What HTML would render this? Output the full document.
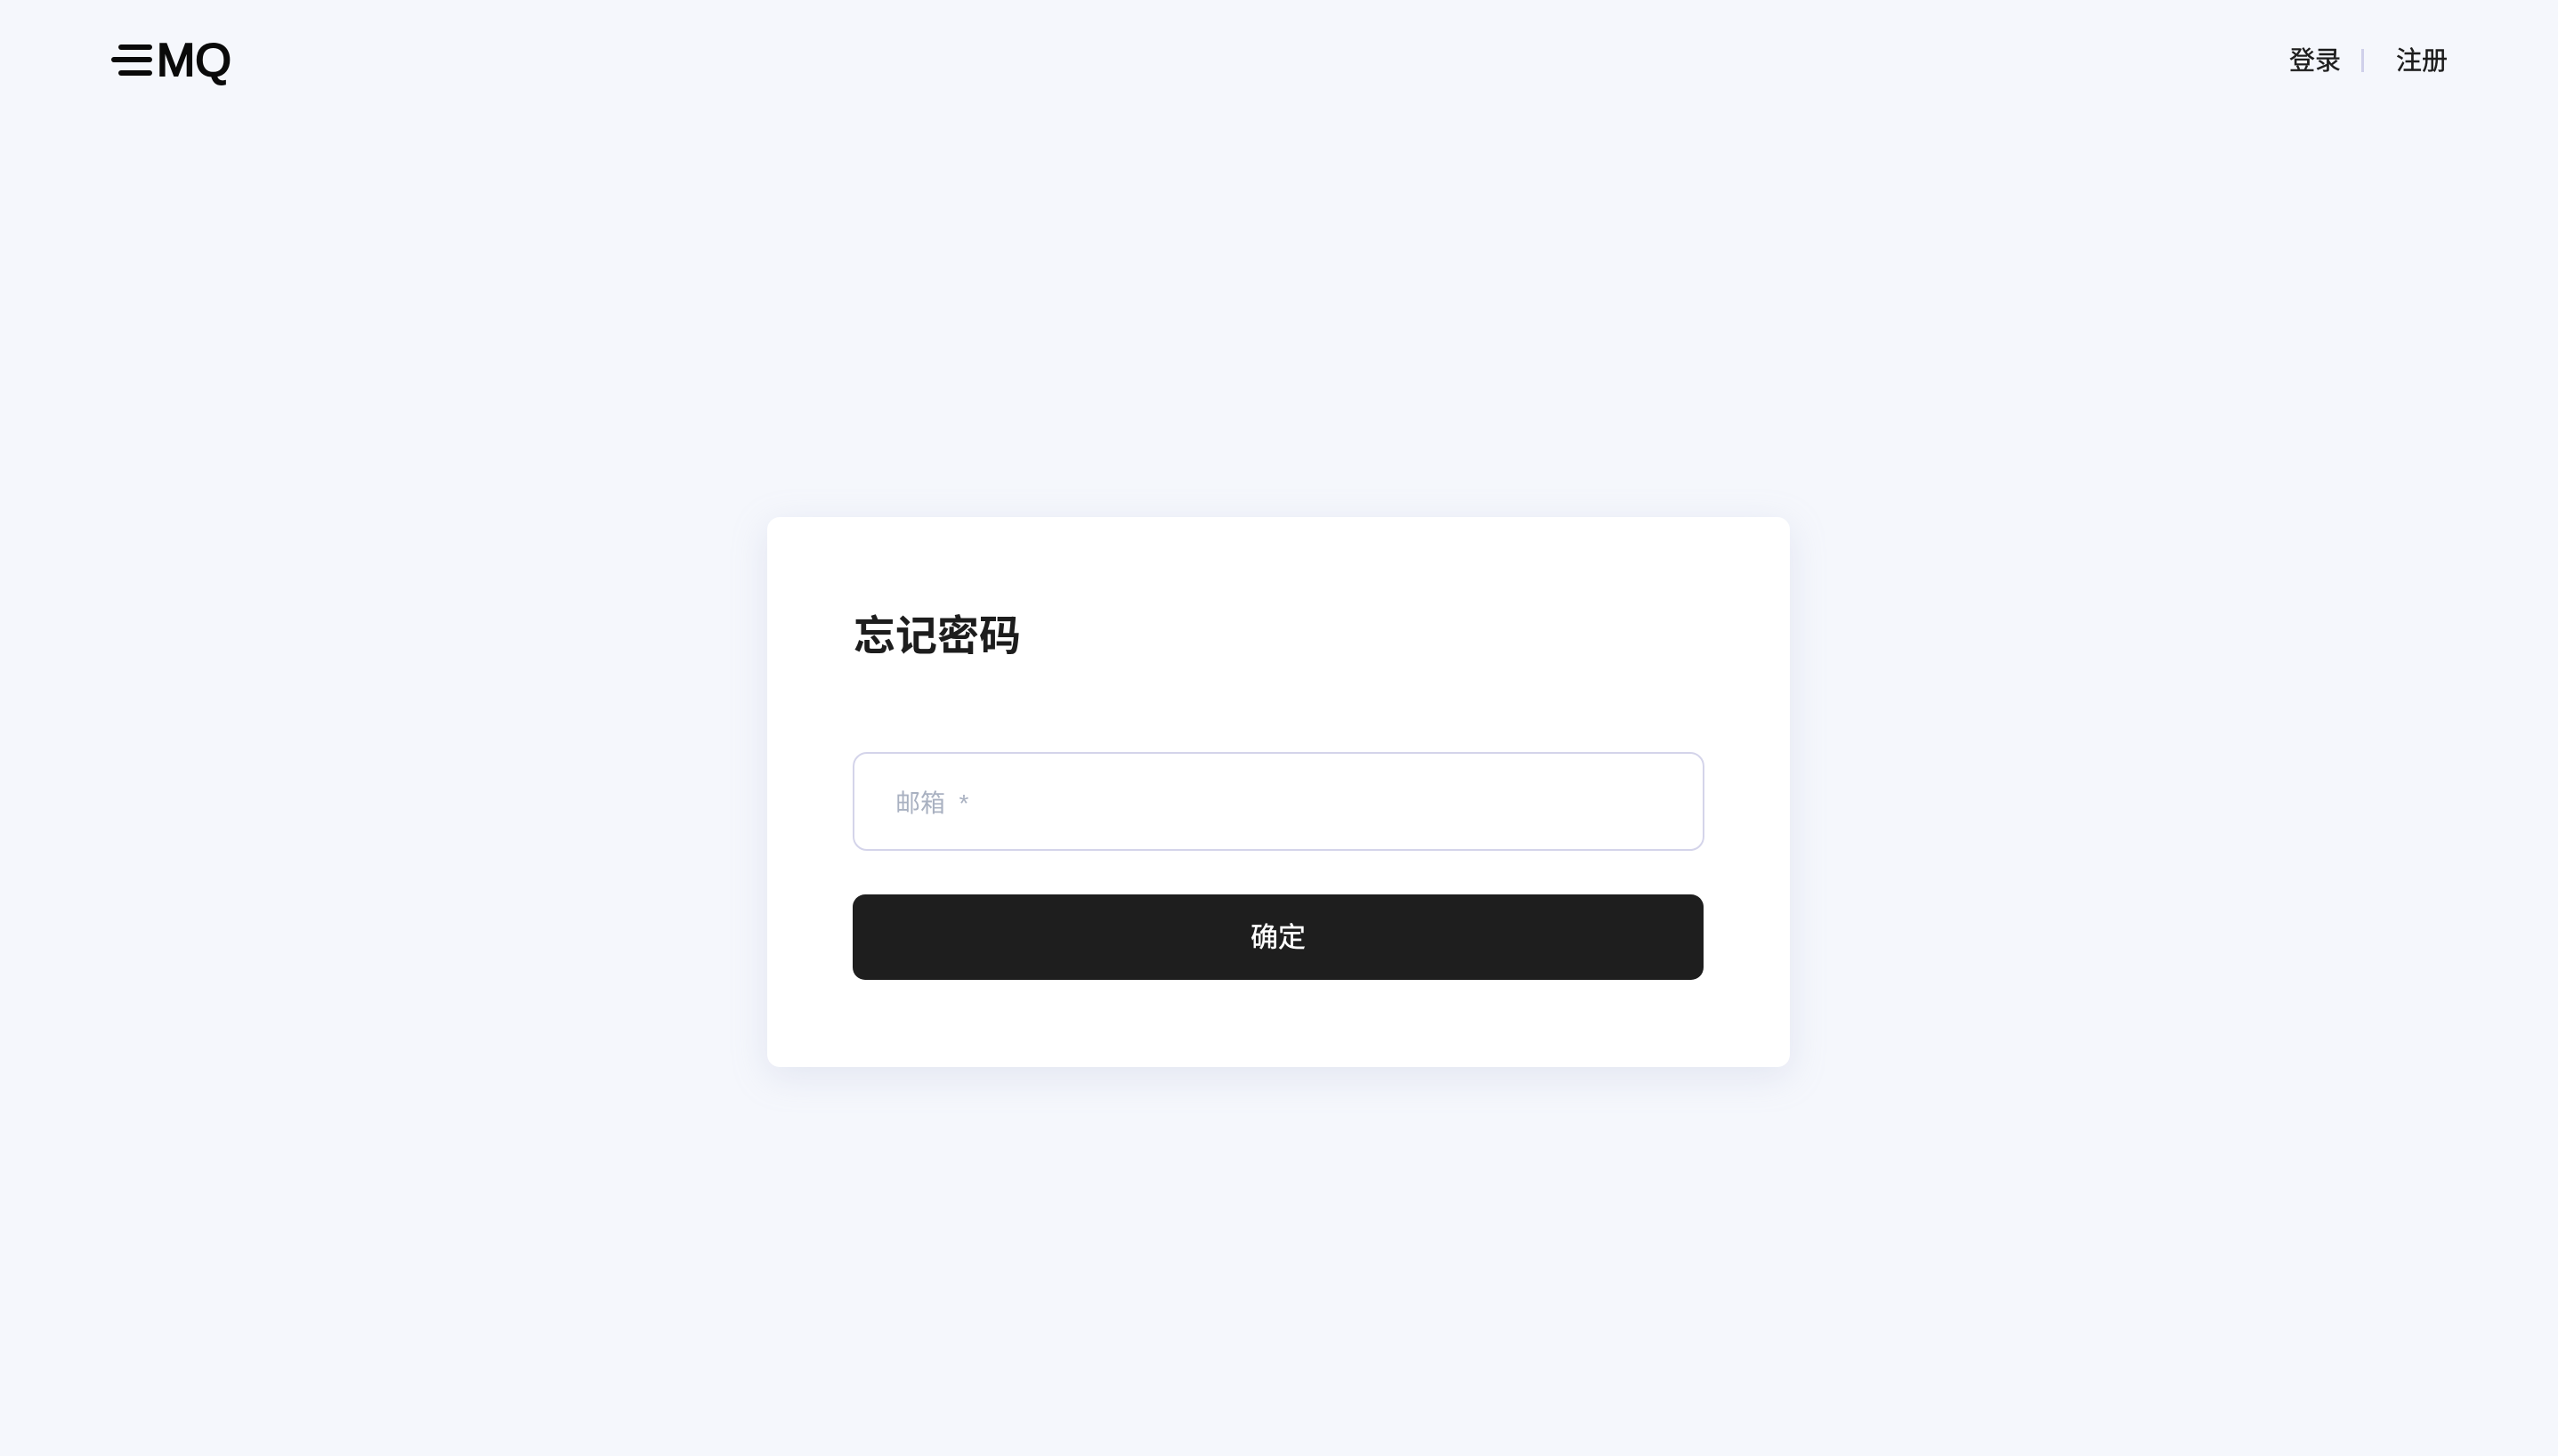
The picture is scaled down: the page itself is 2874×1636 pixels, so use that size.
<!DOCTYPE html>
<html><head><meta charset="utf-8"><style>
html,body{margin:0;padding:0;}
body{width:2874px;height:1636px;background:#f5f7fc;position:relative;overflow:hidden;font-family:"Liberation Sans","Noto Sans CJK SC",sans-serif;}
.bar{position:absolute;height:6px;border-radius:3px;background:#0a0a0a;}
.mq{position:absolute;left:176px;top:38px;font-size:52px;font-weight:400;color:#0a0a0a;letter-spacing:0px;line-height:60px;-webkit-text-stroke:2px #0a0a0a;}
.nav{position:absolute;top:47px;font-size:29px;color:#1d1d1d;line-height:44px;-webkit-text-stroke:0.4px #1d1d1d;}
.sep{position:absolute;left:2653px;top:55px;width:3px;height:26px;background:#cfd0ea;}
.card{position:absolute;left:862px;top:581px;width:1149px;height:618px;background:#fff;border-radius:14px;box-shadow:0 10px 40px rgba(170,180,210,0.25);}
.title{position:absolute;left:959px;top:685px;font-size:47px;font-weight:700;color:#1d1d1d;line-height:60px;}
.input{position:absolute;left:958px;top:845px;width:953px;height:107px;border:2px solid #d4d4ea;border-radius:16px;background:#fff;}
.ph{position:absolute;left:1006px;top:883px;font-size:28px;color:#a9b1c1;line-height:40px;}
.btn{position:absolute;left:958px;top:1005px;width:956px;height:96px;background:#1e1e1e;border-radius:14px;color:#fff;font-size:31px;text-align:center;line-height:98px;-webkit-text-stroke:0.4px #fff;}
</style></head><body>
<div class="bar" style="left:133px;top:50px;width:38px"></div>
<div class="bar" style="left:125px;top:64px;width:46px"></div>
<div class="bar" style="left:133px;top:79px;width:38px"></div>
<div class="mq">MQ</div>
<div class="nav" style="left:2572px">登录</div>
<div class="sep"></div>
<div class="nav" style="left:2692px">注册</div>
<div class="card"></div>
<div class="title">忘记密码</div>
<div class="input"></div>
<div class="ph">邮箱&nbsp;&nbsp;*</div>
<div class="btn">确定</div>
</body></html>
